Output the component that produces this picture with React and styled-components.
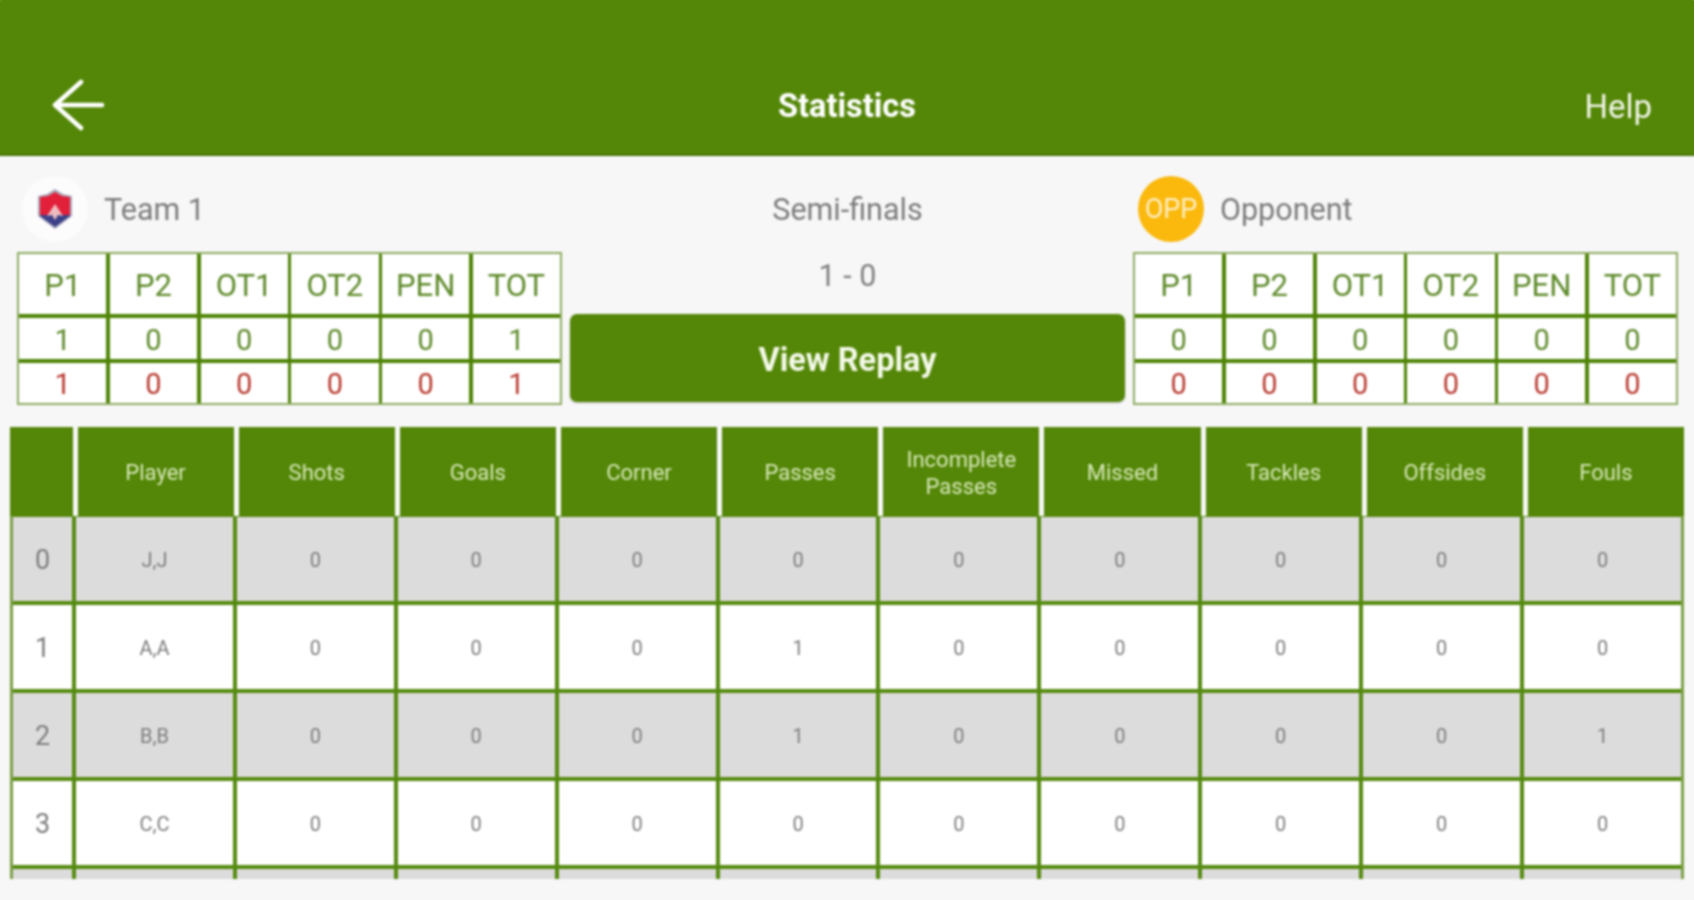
import React from "react";
import styled, { createGlobalStyle } from "styled-components";

const GlobalStyle = createGlobalStyle`
  html, body {
    margin: 0;
    padding: 0;
    height: 100%;
    background: #f7f7f7;
    overflow: hidden;
  }
  * {
    box-sizing: border-box;
  }
`;

const Page = styled.div`
  width: 1694px;
  height: 900px;
  background: #f7f7f7;
  font-family: Roboto, "Liberation Sans", sans-serif;
  filter: blur(0.8px);
`;

const TopBar = styled.header`
  height: 156px;
  padding: 56px 42px 0;
  display: grid;
  grid-template-columns: 1fr auto 1fr;
  align-items: center;
  background: #548708;
  border-bottom: 2px solid #477503;
  box-shadow: 0 -8px 0 #548708, -8px 0 0 #548708, 8px 0 0 #548708;
  color: #fff;
`;

const BackIcon = styled.svg`
  width: 52px;
  height: 52px;
  margin-left: 10px;
  fill: none;
  stroke: #fff;
  stroke-width: 4.5;
  stroke-linecap: round;
  stroke-linejoin: round;
`;

const BarTitle = styled.div`
  padding-top: 2px;
  font-size: 32.5px;
  font-weight: 700;
`;

const HelpLink = styled.div`
  justify-self: end;
  padding-top: 2px;
  font-size: 33px;
  color: #f1f5e8;
`;

const Summary = styled.section`
  padding: 0 16px 22px 17px;
  display: grid;
  grid-template-columns: 545px 1fr 545px;
  column-gap: 8px;
`;

const TeamRow = styled.div`
  height: 96px;
  padding: 19px 0 10px ${(p) => p.$inset || 0}px;
  display: flex;
  align-items: center;
  gap: ${(p) => p.$gap || 16}px;
`;

const TeamName = styled.span`
  padding-top: 2px;
  font-size: 30.5px;
  color: #7c7c7c;
`;

const CrestCircle = styled.div`
  width: 66px;
  height: 66px;
  border-radius: 50%;
  background: #fcfcfc;
  display: flex;
  align-items: center;
  justify-content: center;
`;

const OppBadge = styled.div`
  width: 66px;
  height: 66px;
  border-radius: 50%;
  background: #fbb90e;
  color: #fdeec4;
  font-size: 27px;
  display: flex;
  align-items: center;
  justify-content: center;
`;

const ScoreGrid = styled.div`
  display: grid;
  grid-template-columns: repeat(6, 1fr);
  grid-template-rows: 60px 41px 40px;
  gap: 4px 3.5px;
  background: #4f8406;
  border: 2px solid #8dab62;
`;

const ScoreCell = styled.div`
  background: #fff;
  padding-top: 2px;
  display: flex;
  align-items: center;
  justify-content: center;
  font-size: ${(p) => (p.$head ? 31 : 29)}px;
  color: ${(p) => (p.$red ? "#b93a30" : "#5e8a2a")};
`;

const Middle = styled.div`
  display: flex;
  flex-direction: column;
  align-items: stretch;
`;

const RoundName = styled.div`
  height: 96px;
  padding-top: 11px;
  display: flex;
  align-items: center;
  justify-content: center;
  font-size: 30.5px;
  color: #7c7c7c;
`;

const Score = styled.div`
  height: 62px;
  padding-bottom: 15px;
  display: flex;
  align-items: center;
  justify-content: center;
  font-size: 30.5px;
  color: #808080;
`;

const ReplayButton = styled.button`
  height: 88px;
  padding: 3px 0 0;
  border: none;
  border-radius: 7px;
  background: #548708;
  color: #f4f9e8;
  font-family: inherit;
  font-size: 32.5px;
  font-weight: 700;
  box-shadow: 0 1px 2px rgba(0, 0, 0, 0.25);
`;

const Stats = styled.section`
  padding-left: 10px;
  width: 1684px;
`;

const StatsHead = styled.div`
  height: 89px;
  display: grid;
  grid-template-columns: 62.5px repeat(10, 1fr);
  column-gap: 5px;
`;

const HeadCell = styled.div`
  padding-top: 2px;
  background: #548708;
  color: #d6e7b8;
  font-size: 22px;
  line-height: 27px;
  text-align: center;
  display: flex;
  align-items: center;
  justify-content: center;
`;

const StatsBody = styled.div`
  height: 363px;
  overflow: hidden;
  display: grid;
  grid-template-columns: 59px repeat(10, 1fr);
  grid-auto-rows: 84px;
  gap: 4px;
  padding-top: 1px;
  background: #558a10;
  border-left: 3px solid #7a9f45;
  border-right: 3px solid #7a9f45;
`;

const BodyCell = styled.div`
  padding-top: 2px;
  background: ${(p) => (p.$alt ? "#dddcdd" : "#fff")};
  color: #7d7d7d;
  font-size: ${(p) => (p.$index ? 27 : 20)}px;
  display: flex;
  align-items: center;
  justify-content: center;
`;

const columns = [
  "Player",
  "Shots",
  "Goals",
  "Corner",
  "Passes",
  "Incomplete Passes",
  "Missed",
  "Tackles",
  "Offsides",
  "Fouls",
];

const players = [
  ["0", "J,J", 0, 0, 0, 0, 0, 0, 0, 0, 0],
  ["1", "A,A", 0, 0, 0, 1, 0, 0, 0, 0, 0],
  ["2", "B,B", 0, 0, 0, 1, 0, 0, 0, 0, 1],
  ["3", "C,C", 0, 0, 0, 0, 0, 0, 0, 0, 0],
  ["", "", "", "", "", "", "", "", "", "", ""],
];

const periods = ["P1", "P2", "OT1", "OT2", "PEN", "TOT"];

const Crest = () => (
  <svg width="36" height="42" viewBox="0 0 36 42">
    <path d="M1 8 L10 6 L18 1 L26 6 L35 8 L35 28 L18 41 L1 28 Z" fill="#a9a9bd" />
    <path d="M3 9 L11 8 L18 4 L25 8 L33 9 L33 27 L3 27 Z" fill="#e2203a" />
    <path d="M3 27 L33 27 L33 28 L18 39 L3 28 Z" fill="#3c4188" />
    <path d="M18 16 L26 28 L21 27 L18 32 L15 27 L10 28 Z" fill="#eebcc0" />
  </svg>
);

const PeriodTable = ({ top, bottom }) => (
  <ScoreGrid>
    {periods.map((p) => (
      <ScoreCell key={p} $head>
        {p}
      </ScoreCell>
    ))}
    {top.map((v, i) => (
      <ScoreCell key={i}>{v}</ScoreCell>
    ))}
    {bottom.map((v, i) => (
      <ScoreCell key={i} $red>
        {v}
      </ScoreCell>
    ))}
  </ScoreGrid>
);

const App = () => {
  return (
    <Page>
      <GlobalStyle />
      <TopBar>
        <BackIcon viewBox="0 0 52 52">
          <path d="M29 3 L3 26 L29 49 M3 26 H50" />
        </BackIcon>
        <BarTitle>Statistics</BarTitle>
        <HelpLink>Help</HelpLink>
      </TopBar>

      <Summary>
        <div>
          <TeamRow $inset={5} $gap={16}>
            <CrestCircle>
              <Crest />
            </CrestCircle>
            <TeamName>Team 1</TeamName>
          </TeamRow>
          <PeriodTable top={[1, 0, 0, 0, 0, 1]} bottom={[1, 0, 0, 0, 0, 1]} />
        </div>
        <Middle>
          <RoundName>Semi-finals</RoundName>
          <Score>1 - 0</Score>
          <ReplayButton>View Replay</ReplayButton>
        </Middle>
        <div>
          <TeamRow $inset={5}>
            <OppBadge>OPP</OppBadge>
            <TeamName>Opponent</TeamName>
          </TeamRow>
          <PeriodTable top={[0, 0, 0, 0, 0, 0]} bottom={[0, 0, 0, 0, 0, 0]} />
        </div>
      </Summary>

      <Stats>
        <StatsHead>
          <HeadCell />
          {columns.map((c) => (
            <HeadCell key={c}>{c}</HeadCell>
          ))}
        </StatsHead>
        <StatsBody>
          {players.map((row, r) =>
            row.map((v, c) => (
              <BodyCell key={`${r}-${c}`} $alt={r % 2 === 0} $index={c === 0}>
                {v}
              </BodyCell>
            ))
          )}
        </StatsBody>
      </Stats>
    </Page>
  );
};

export default App;
